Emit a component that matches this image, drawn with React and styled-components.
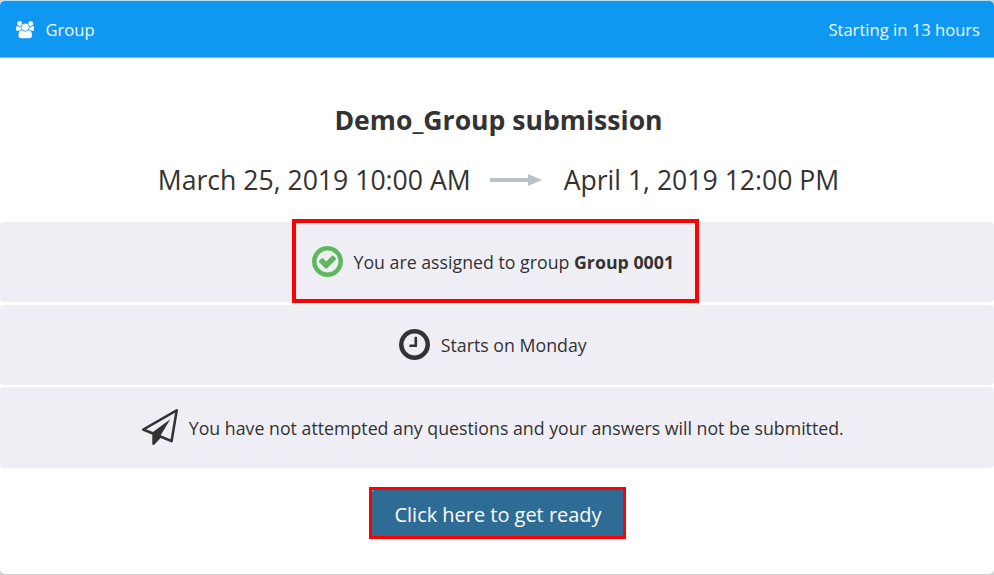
import React from 'react';
import styled, { createGlobalStyle } from 'styled-components';

const GlobalStyle = createGlobalStyle`
  * {
    box-sizing: border-box;
  }
  body {
    margin: 0;
    background: #d0d0d0;
    font-family: 'Open Sans', sans-serif;
    color: #333;
    overflow: hidden;
  }
`;

const Card = styled.div`
  width: 994px;
  height: 574px;
  background: #fff;
  border-radius: 5px;
  overflow: hidden;
`;

const Header = styled.header`
  display: flex;
  align-items: center;
  justify-content: space-between;
  height: 58px;
  padding: 2px 14px 0 16px;
  background: #0f98f2;
  border-top: 1px solid #b9ddf5;
  border-bottom: 1px solid #6fc0f5;
  border-radius: 5px 5px 0 0;
  color: #f0f8fe;
  font-size: 16.6px;
`;

const HeaderLabel = styled.div`
  display: flex;
  align-items: center;
  gap: 11px;
`;

const HeaderText = styled.span`
  padding-bottom: 2px;
`;

const Title = styled.h1`
  margin: 43px 0 0 3px;
  height: 38px;
  line-height: 38px;
  font-size: 26.6px;
  font-weight: 700;
  text-align: center;
`;

const Dates = styled.div`
  display: flex;
  align-items: center;
  justify-content: center;
  height: 38px;
  margin: 22px 0 23px 3px;
  font-size: 26.6px;
`;

const DateArrow = styled.svg`
  width: 52px;
  height: 12px;
  margin: 0 22px 0 19px;
  fill: #b9c1c6;
`;

const Rows = styled.div`
  display: grid;
  grid-template-rows: 80px 80px 81px;
  row-gap: 2.5px;
`;

const Row = styled.div`
  position: relative;
  display: flex;
  align-items: center;
  justify-content: center;
  gap: 10.5px;
  padding-right: 8px;
  padding-bottom: ${(props) => props.$lift || 0}px;
  background: #efeef5;
  border-radius: 4px;
  font-size: 17.75px;
`;

const Highlight = styled.div`
  position: absolute;
  left: 292px;
  top: -3px;
  width: 407px;
  height: 84px;
  border: 4px solid #f00;
`;

const Icon = styled.svg`
  flex: none;
  display: block;
  width: ${(props) => props.$width}px;
  height: ${(props) => props.$height || props.$width}px;
  fill: ${(props) => props.$color || '#333'};
`;

const RowText = styled.span`
  padding-top: ${(props) => props.$drop || 1}px;
  white-space: nowrap;
`;

const ButtonHighlight = styled.div`
  width: 257px;
  height: 52px;
  margin: 19px 0 0 369px;
  border: 3px solid #f00;
`;

const ReadyButton = styled.button`
  display: block;
  width: 100%;
  height: 100%;
  padding: 2px 0 0 1px;
  background: #2e6b95;
  border: none;
  border-radius: 2px 1px 0 0;
  color: #fff;
  font-family: inherit;
  font-size: 19.95px;
  cursor: pointer;
`;

const RING =
  'M1440 896q0-148-73-273t-198-198-273-73-273 73-198 198-73 273 73 273 198 198 273 73 273-73 198-198 73-273zm224 0q0 209-103 385.5t-279.5 279.5-385.5 103-385.5-103-279.5-279.5-103-385.5 103-385.5 279.5-279.5 385.5-103 385.5 103 279.5 279.5 103 385.5z';

function UsersIcon() {
  return (
    <Icon viewBox="0 0 1920 1792" $width={18.4} $height={17.2} $color="#fff">
      <path d="M593 896q-162 5-265 128h-134q-82 0-138-40.5t-56-118.5q0-353 124-353 6 0 43.5 21t97.5 42.5 119 21.5q67 0 133-23-5 37-5 66 0 139 81 256zm1071 637q0 120-73 189.5t-194 69.5h-874q-121 0-194-69.5t-73-189.5q0-53 3.5-103.5t14-109 26.5-108.5 43-97.5 62-81 85.5-53.5 111.5-20q10 0 43 21.5t73 48 107 48 135 21.5 135-21.5 107-48 73-48 43-21.5q61 0 111.5 20t85.5 53.5 62 81 43 97.5 26.5 108.5 14 109 3.5 103.5zm-1024-1277q0 106-75 181t-181 75-181-75-75-181 75-181 181-75 181 75 75 181zm704 384q0 159-112.5 271.5t-271.5 112.5-271.5-112.5-112.5-271.5 112.5-271.5 271.5-112.5 271.5 112.5 112.5 271.5zm576 225q0 78-56 118.5t-138 40.5h-134q-103-123-265-128 81-117 81-256 0-29-5-66 66 23 133 23 59 0 119-21.5t97.5-42.5 43.5-21q124 0 124 353zm-128-609q0 106-75 181t-181 75-181-75-75-181 75-181 181-75 181 75 75 181z" />
    </Icon>
  );
}

function CheckIcon() {
  return (
    <Icon viewBox="128 128 1536 1536" $width={31} $color="#5cb85c">
      <path d="M1299 813l-422 422q-19 19-45 19t-45-19l-294-294q-19-19-19-45t19-45l102-102q19-19 45-19t45 19l147 147 275-275q19-19 45-19t45 19l102 102q19 19 19 45t-19 45z" />
      <path d={RING} />
    </Icon>
  );
}

function ClockIcon() {
  return (
    <Icon viewBox="128 128 1536 1536" $width={31}>
      <path d="M1024 544v448q0 14-9 23t-23 9h-320q-14 0-23-9t-9-23v-64q0-14 9-23t23-9h224v-352q0-14 9-23t23-9h64q14 0 23 9t9 23z" />
      <path d={RING} />
    </Icon>
  );
}

function PlaneIcon() {
  return (
    <Icon viewBox="0 0 1792 1792" $width={36}>
      <path d="M1764 11q33 24 27 64l-256 1536q-5 29-32 45-14 8-31 8-11 0-24-5l-527-215-298 327q-18 21-47 21-14 0-23-4-19-7-30-23.5t-11-36.5v-452l-472-193q-37-14-40-55-3-39 32-59l1664-960q35-21 68 2zm-342 1499l221-1323-1434 827 336 137 863-639-478 797z" />
    </Icon>
  );
}

function App() {
  return (
    <>
      <GlobalStyle />
      <Card>
        <Header>
          <HeaderLabel>
            <UsersIcon />
            <HeaderText>Group</HeaderText>
          </HeaderLabel>
          <HeaderText>Starting in 13 hours</HeaderText>
        </Header>
        <Title>Demo_Group submission</Title>
        <Dates>
          <span>March 25, 2019 10:00 AM</span>
          <DateArrow viewBox="0 0 52 12">
            <path d="M0 4h38V0l14 6-14 6V8H0z" />
          </DateArrow>
          <span>April 1, 2019 12:00 PM</span>
        </Dates>
        <Rows>
          <Row $lift={2}>
            <CheckIcon />
            <RowText>
              You are assigned to group <strong>Group 0001</strong>
            </RowText>
            <Highlight />
          </Row>
          <Row $lift={1}>
            <ClockIcon />
            <RowText>Starts on Monday</RowText>
          </Row>
          <Row $lift={2}>
            <PlaneIcon />
            <RowText $drop={3}>
              You have not attempted any questions and your answers will not be submitted.
            </RowText>
          </Row>
        </Rows>
        <ButtonHighlight>
          <ReadyButton>Click here to get ready</ReadyButton>
        </ButtonHighlight>
      </Card>
    </>
  );
}

export default App;
